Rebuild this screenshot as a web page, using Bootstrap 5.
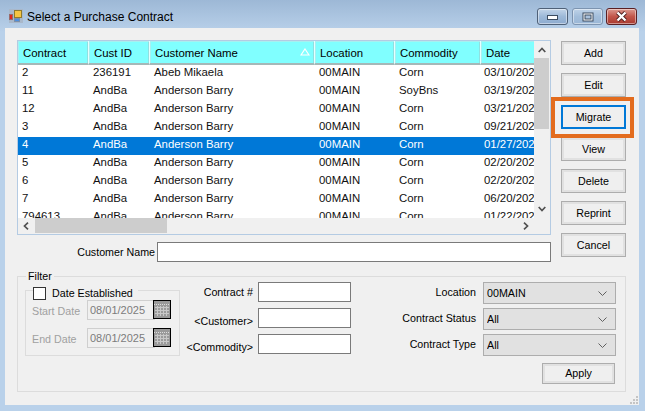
<!DOCTYPE html>
<html lang="en">
<head>
<meta charset="utf-8">
<title>Select a Purchase Contract</title>
<link href="https://cdn.jsdelivr.net/npm/bootstrap@5.3.0/dist/css/bootstrap.min.css" rel="stylesheet">
<style>
html,body{height:411px;overflow:hidden}
body{background:linear-gradient(#9db8d6 0,#b9d1ea 32px,#b9d1ea 100%);font-family:"Liberation Sans",sans-serif;font-size:10.7px;color:#000;line-height:14px}
.titlebar{height:28px;padding:8px 8px 0 9px}
.appico{flex:none;margin-top:1px}
.ttl{font-size:12px;margin-left:4px;line-height:18px}
.capbtns{gap:3px}
.capb{width:31px;height:17px;border:1px solid #4f6178;border-radius:3px;background:linear-gradient(#c3d5e9,#9db9d8 50%,#8dabcf);box-shadow:inset 0 0 0 1px rgba(255,255,255,.45)}
.capb:first-child{margin-right:1px}
.capb.dim{border-color:#7d94b0;background:linear-gradient(#bfd3e8,#a3bedb 50%,#9bb7d6)}
.capb.red{border-color:#5a2024;background:linear-gradient(#dc9a90,#c2564a 50%,#a93a30)}
.client{position:relative;margin:0 6px 0 5px;height:377px;background:#f0f0f0;padding:12px 0 0 12px}
.topgrid{display:grid;grid-template-columns:534px 65px;column-gap:10px}
.listbox{height:195px;border:1px solid #b4cbe3;background:#f0f0f0;display:grid;grid-template-columns:516px 16px;grid-template-rows:177px 16px}
.vport{overflow:hidden;background:#fff}
.ctable{table-layout:fixed;width:560px;border-collapse:separate;border-spacing:0;font-size:11.4px;margin:0}
.ctable.table>:not(caption)>*>*{padding:0 0 0 4px;height:18px;line-height:15px;vertical-align:top;border:0;white-space:nowrap;overflow:hidden;color:#111;background:transparent;box-shadow:none}
.ctable.table>tbody>tr>td.datecell{padding-left:3px}
.ctable.table>thead>tr>th{position:relative;height:24px;line-height:20px;padding:2px 0 0 5px;font-weight:400;background:#80ffff;border-right:1px solid #e6ffff;border-bottom:2px solid #a5b8b8;box-shadow:inset 1px 1px 0 #a8f0f0,inset -1px 0 0 #90e0e0;color:#000}
.ctable.table>tbody>tr.rowsel>td{background:#0078d7;color:#fff}
.sorttri{position:absolute;right:4px;top:7px}
.vscroll{position:relative;background:#f0f0f0}
.hscroll{position:relative;background:#f0f0f0}
.arrow{position:absolute}
.vthumb{position:absolute;left:0;right:1px;top:17px;height:71px;background:#cdcdcd}
.hthumb{position:absolute;left:17px;width:132px;top:0;bottom:1px;background:#cdcdcd}
.btncol{padding-top:1px;row-gap:8px}
.btn.wbtn{width:65px;height:24px;padding:0;font-size:10.7px;line-height:20px;color:#000;background:#efefef;border:1px solid #adadad;border-radius:0;box-shadow:inset 0 0 0 2px #e1e1e1;font-family:inherit}
.btn.wbtn.focusb{border:2px solid #0078d7;box-shadow:none;line-height:19px}
.btn.wbtn.applyb{width:73px;height:21px;line-height:17px}
.migwrap{position:relative}
.hilite{position:absolute;left:-10px;right:-8px;top:-8px;bottom:-9px;border:4px solid #e36c1e;pointer-events:none}
.custrow{margin-top:7px;gap:2px}
.lblcust{flex:none;width:138px;text-align:right}
.form-control.winput{height:20px;min-height:0;padding:0 3px;font-size:11px;border:1px solid #7a7a7a;border-radius:0;background:#fff;box-shadow:none}
.custrow .form-control.winput{flex:1 1 0;width:auto;min-width:0}
.filterbox{margin:7px 0 0 0;width:609px;height:123px;border:1px solid #dcdcdc;padding:0;min-width:0;display:block}
.filterbox>legend{float:none;width:auto;font-size:10.7px;line-height:14px;margin:0 0 0 8px;padding:0 2px}
.fgrid{display:grid;grid-template-columns:162px 171px 265px;margin-top:-1px}
.dategroup{margin:8px 0 0 7px;width:155px;height:66px;border:1px solid #dcdcdc}
.dhead{margin:-5px 0 0 7px;width:max-content;background:#f0f0f0;gap:6px;height:14px;padding-right:5px}
.wcheck{width:13px;height:13px;border:1px solid #333;background:#fff;flex:none}
.drow{height:20px;margin-top:8px;color:#a0a0a0}
.dhead+.drow{margin-top:0}
.dlbl{flex:none;width:61px;padding:2px 0 0 6px;white-space:nowrap}
.dval{flex:none;width:68px;height:20px;border:1px solid #cfcfcf;border-right-color:#dcdcdc;background:#f0f0f0;color:#7c7c7c;padding-left:2px;line-height:18px;font-size:11px;white-space:nowrap}
.calb{width:18px;height:19px;margin-left:-2px;background:#999;border:1px solid #000;display:block;flex:none}
.midcol{row-gap:6px;display:grid;grid-template-columns:73px 93px;column-gap:5px;align-content:start}
.midcol label,.rcol label{text-align:right;align-self:center;white-space:nowrap}
.midcol label.lowlbl{padding-top:6px}
.rcol label{padding-bottom:2px}
.rcol{display:grid;grid-template-columns:125px 133px;column-gap:7px;row-gap:4px;align-content:start}
.form-select.wsel{height:22px;min-height:0;padding:0 0 0 3px;font-size:10.7px;line-height:20px;color:#000;background-color:#e1e1e1;border:1px solid #adadad;border-radius:0;background-position:right 8px center;background-size:9px 5px;background-image:url("data:image/svg+xml,%3csvg xmlns='http://www.w3.org/2000/svg' viewBox='0 0 9 5'%3e%3cpath fill='none' stroke='%23606060' d='M.5.5l4 4 4-4'/%3e%3c/svg%3e");box-shadow:none}
.applywrap{grid-column:2;margin:3px 0 0 59px;line-height:0}
.grip{position:absolute;right:0;bottom:0}
</style>
</head>
<body>
<div class="titlebar d-flex align-items-start">
  <svg class="appico" width="14" height="15" viewBox="0 0 14 15"><rect width="14" height="14" fill="#a9b8ca"/><rect x="0.5" y="5.5" width="3" height="5" fill="#e0261c" stroke="#9a6a6a"/><rect x="5.5" y="1.5" width="7" height="7" fill="#f5c542" stroke="#8f7a2c"/><rect x="5.5" y="9.5" width="5" height="3" fill="#4d8fe0" stroke="#7c8fa8"/></svg>
  <div class="ttl">Select a Purchase Contract</div>
  <div class="capbtns d-flex ms-auto">
    <div class="capb d-flex align-items-center justify-content-center"><svg width="13" height="6" viewBox="0 0 13 6"><rect x="1.5" y="1.5" width="10" height="4" fill="#fff" stroke="#3c4c60"/></svg></div>
    <div class="capb dim d-flex align-items-center justify-content-center"><svg width="12" height="10" viewBox="0 0 12 10"><rect x="1" y="1" width="10" height="8" fill="#fff" stroke="#3c4c60"/><rect x="3" y="3" width="6" height="4" fill="#a9c1dc" stroke="#3c4c60" stroke-width="1"/></svg></div>
    <div class="capb red d-flex align-items-center justify-content-center"><svg width="13" height="11" viewBox="0 0 13 11"><path d="M2.5 1.5l8 8M10.5 1.5l-8 8" stroke="#4a1c1c" stroke-width="4"/><path d="M2.5 1.5l8 8M10.5 1.5l-8 8" stroke="#fff" stroke-width="2.4"/></svg></div>
  </div>
</div>
<div class="client">
  <div class="topgrid">
    <div>
      <div class="listbox">
        <div class="vport">
          <table class="table ctable">
            <colgroup><col style="width:71px"><col style="width:61px"><col style="width:165px"><col style="width:80px"><col style="width:86px"><col style="width:97px"></colgroup>
            <thead><tr><th>Contract</th><th>Cust ID</th><th>Customer Name<svg class="sorttri" width="10" height="8" viewBox="0 0 10 8"><path d="M5 1L9 7H1z" fill="#80ffff" stroke="#fff" stroke-width="1.2"/></svg></th><th>Location</th><th>Commodity</th><th>Date</th></tr></thead>
            <tbody>
              <tr><td>2</td><td>236191</td><td>Abeb Mikaela</td><td>00MAIN</td><td>Corn</td><td class="datecell">03/10/2021</td></tr>
              <tr><td>11</td><td>AndBa</td><td>Anderson Barry</td><td>00MAIN</td><td>SoyBns</td><td class="datecell">03/19/2025</td></tr>
              <tr><td>12</td><td>AndBa</td><td>Anderson Barry</td><td>00MAIN</td><td>Corn</td><td class="datecell">03/21/2025</td></tr>
              <tr><td>3</td><td>AndBa</td><td>Anderson Barry</td><td>00MAIN</td><td>Corn</td><td class="datecell">09/21/2022</td></tr>
              <tr class="rowsel"><td>4</td><td>AndBa</td><td>Anderson Barry</td><td>00MAIN</td><td>Corn</td><td class="datecell">01/27/2023</td></tr>
              <tr><td>5</td><td>AndBa</td><td>Anderson Barry</td><td>00MAIN</td><td>Corn</td><td class="datecell">02/20/2024</td></tr>
              <tr><td>6</td><td>AndBa</td><td>Anderson Barry</td><td>00MAIN</td><td>Corn</td><td class="datecell">02/20/2024</td></tr>
              <tr><td>7</td><td>AndBa</td><td>Anderson Barry</td><td>00MAIN</td><td>Corn</td><td class="datecell">06/20/2024</td></tr>
              <tr><td>794613</td><td>AndBa</td><td>Anderson Barry</td><td>00MAIN</td><td>Corn</td><td class="datecell">01/22/2021</td></tr>
            </tbody>
          </table>
        </div>
        <div class="vscroll">
          <svg class="arrow" style="left:4px;top:6px" width="8" height="6" viewBox="0 0 8 6"><path d="M.7 5L4 1.5 7.3 5" fill="none" stroke="#505050" stroke-width="1.7"/></svg>
          <div class="vthumb"></div>
          <svg class="arrow" style="left:4px;bottom:6px" width="8" height="6" viewBox="0 0 8 6"><path d="M.7 1L4 4.5 7.3 1" fill="none" stroke="#505050" stroke-width="1.7"/></svg>
        </div>
        <div class="hscroll">
          <svg class="arrow" style="left:5px;top:4px" width="6" height="8" viewBox="0 0 6 8"><path d="M5 .7L1.5 4 5 7.3" fill="none" stroke="#505050" stroke-width="1.7"/></svg>
          <div class="hthumb"></div>
          <svg class="arrow" style="right:5px;top:4px" width="6" height="8" viewBox="0 0 6 8"><path d="M1 .7L4.5 4 1 7.3" fill="none" stroke="#505050" stroke-width="1.7"/></svg>
        </div>
        <div></div>
      </div>
      <div class="custrow d-flex align-items-center">
        <label class="lblcust" for="custname">Customer Name</label>
        <input id="custname" class="form-control winput" type="text">
      </div>
    </div>
    <div class="btncol d-flex flex-column">
      <button class="btn wbtn" type="button">Add</button>
      <button class="btn wbtn" type="button">Edit</button>
      <div class="migwrap"><button class="btn wbtn focusb d-block" type="button">Migrate</button><div class="hilite"></div></div>
      <button class="btn wbtn" type="button">View</button>
      <button class="btn wbtn" type="button">Delete</button>
      <button class="btn wbtn" type="button">Reprint</button>
      <button class="btn wbtn" type="button">Cancel</button>
    </div>
  </div>
  <fieldset class="filterbox">
    <legend>Filter</legend>
    <div class="fgrid">
      <div class="dategroup">
        <div class="dhead d-flex align-items-center"><span class="wcheck"></span><span>Date Established</span></div>
        <div class="drow d-flex align-items-start"><span class="dlbl align-self-center">Start Date</span><span class="dval">08/01/2025</span><svg class="calb" viewBox="0 0 16 17"><rect width="16" height="17" fill="#9a9a9a"/><path d="M0 3.5h16" stroke="#ddd" stroke-dasharray="1 1"/><path d="M1 6.5h14M1 9.5h14M1 12.5h14M3.5 5v10M6.5 5v10M9.5 5v10M12.5 5v10" stroke="#c8c8c8" fill="none"/></svg></div>
        <div class="drow d-flex align-items-start"><span class="dlbl align-self-center">End Date</span><span class="dval">08/01/2025</span><svg class="calb" viewBox="0 0 16 17"><rect width="16" height="17" fill="#9a9a9a"/><path d="M0 3.5h16" stroke="#ddd" stroke-dasharray="1 1"/><path d="M1 6.5h14M1 9.5h14M1 12.5h14M3.5 5v10M6.5 5v10M9.5 5v10M12.5 5v10" stroke="#c8c8c8" fill="none"/></svg></div>
      </div>
      <div class="midcol">
        <label for="fcontract">Contract #</label><input id="fcontract" class="form-control winput" type="text">
        <label class="lowlbl" for="fcustomer">&lt;Customer&gt;</label><input id="fcustomer" class="form-control winput" type="text">
        <label class="lowlbl" for="fcommodity">&lt;Commodity&gt;</label><input id="fcommodity" class="form-control winput" type="text">
      </div>
      <div class="rcol">
        <label for="floc">Location</label><select id="floc" class="form-select wsel"><option>00MAIN</option></select>
        <label for="fstat">Contract Status</label><select id="fstat" class="form-select wsel"><option>All</option></select>
        <label for="ftype">Contract Type</label><select id="ftype" class="form-select wsel"><option>All</option></select>
        <div class="applywrap"><button class="btn wbtn applyb" type="button">Apply</button></div>
      </div>
    </div>
  </fieldset>
  <svg class="grip" width="10" height="10" viewBox="0 0 10 10"><path d="M7 1h2v2H7zM4 4h2v2H4zM7 4h2v2H7zM1 7h2v2H1zM4 7h2v2H4zM7 7h2v2H7z" fill="#c4c4c4"/></svg>
</div>
</body>
</html>
